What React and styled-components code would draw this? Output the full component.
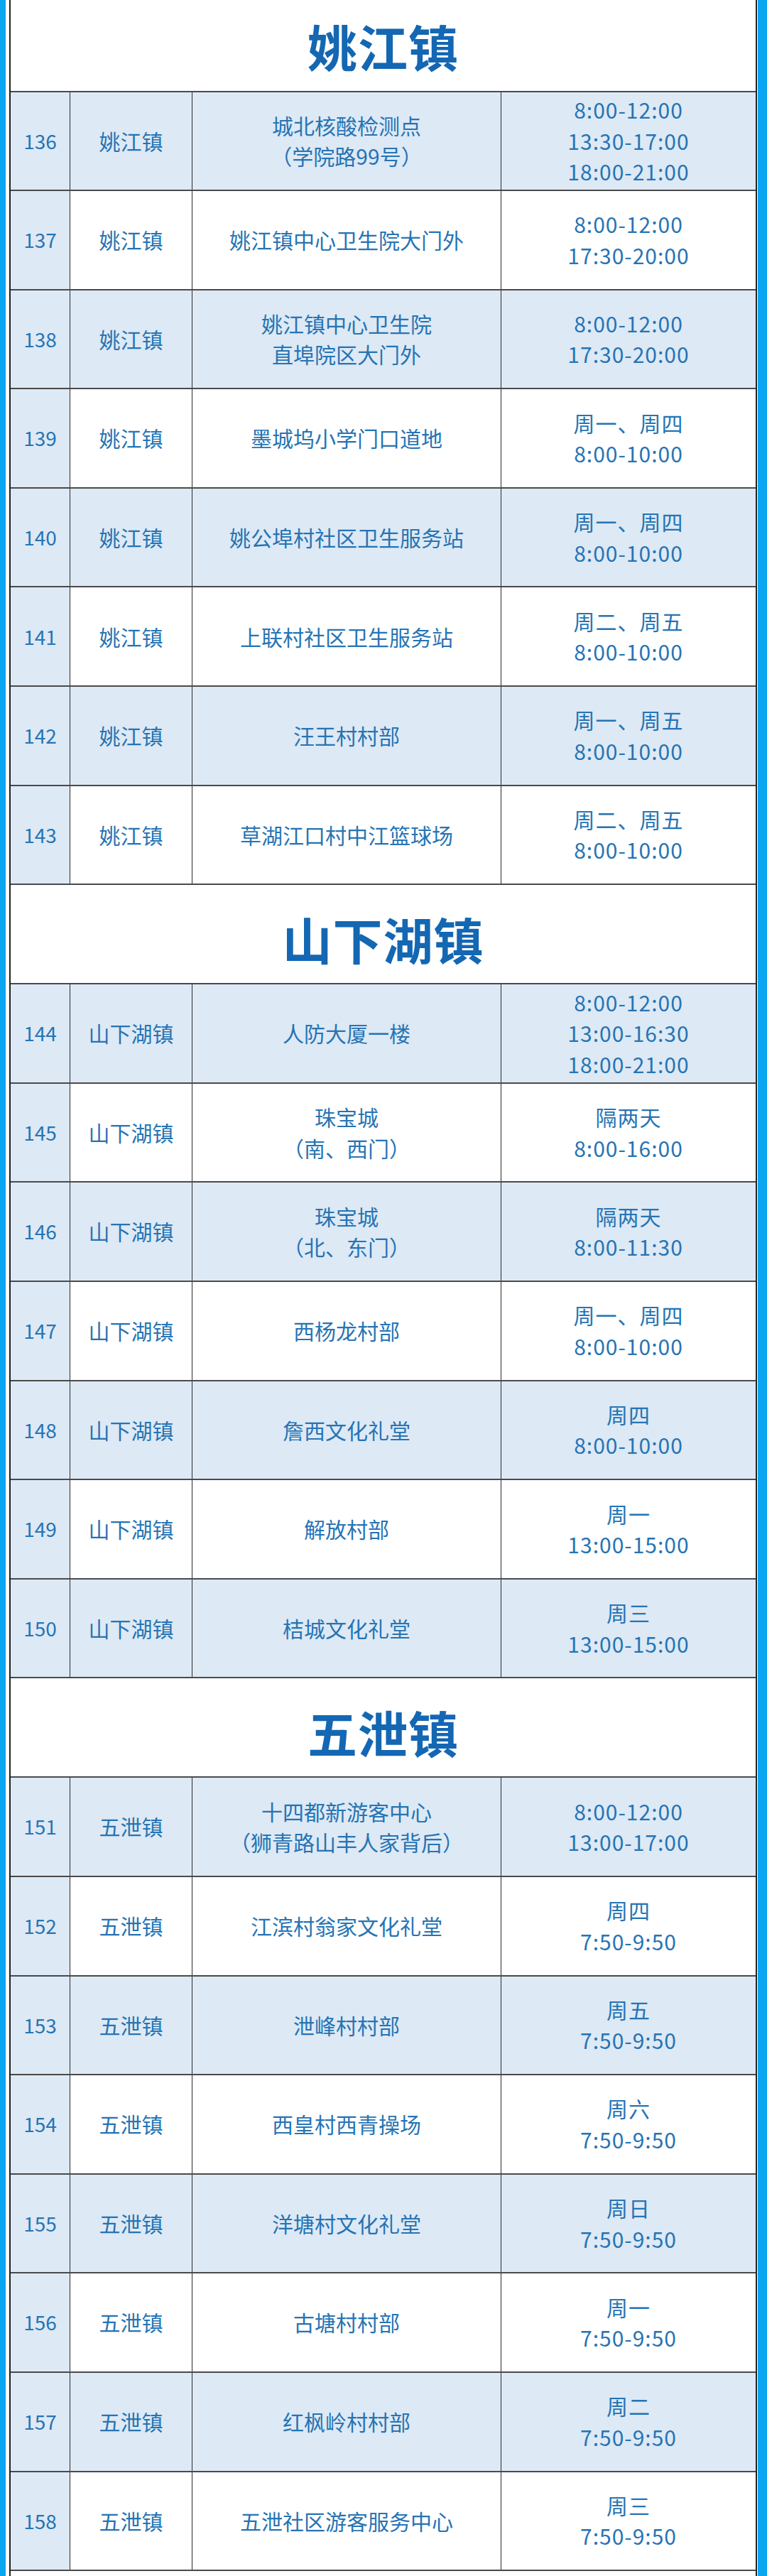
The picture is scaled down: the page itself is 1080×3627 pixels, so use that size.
import React from 'react';
import styled, { createGlobalStyle } from 'styled-components';

const GlobalStyle = createGlobalStyle`
  html, body {
    margin: 0;
    padding: 0;
    background: #0aa6f2;
  }
  body {
    font-family: "Noto Sans CJK SC", "Noto Sans", sans-serif;
  }
`;

const sections = [
  {
    town: '姚江镇',
    first: true,
    rows: [
      ['136', ['城北核酸检测点', '（学院路99号）'], ['8:00-12:00', '13:30-17:00', '18:00-21:00']],
      ['137', ['姚江镇中心卫生院大门外'], ['8:00-12:00', '17:30-20:00']],
      ['138', ['姚江镇中心卫生院', '直埠院区大门外'], ['8:00-12:00', '17:30-20:00']],
      ['139', ['墨城坞小学门口道地'], ['周一、周四', '8:00-10:00']],
      ['140', ['姚公埠村社区卫生服务站'], ['周一、周四', '8:00-10:00']],
      ['141', ['上联村社区卫生服务站'], ['周二、周五', '8:00-10:00']],
      ['142', ['汪王村村部'], ['周一、周五', '8:00-10:00']],
      ['143', ['草湖江口村中江篮球场'], ['周二、周五', '8:00-10:00']],
    ],
  },
  {
    town: '山下湖镇',
    rows: [
      ['144', ['人防大厦一楼'], ['8:00-12:00', '13:00-16:30', '18:00-21:00']],
      ['145', ['珠宝城', '（南、西门）'], ['隔两天', '8:00-16:00']],
      ['146', ['珠宝城', '（北、东门）'], ['隔两天', '8:00-11:30']],
      ['147', ['西杨龙村部'], ['周一、周四', '8:00-10:00']],
      ['148', ['詹西文化礼堂'], ['周四', '8:00-10:00']],
      ['149', ['解放村部'], ['周一', '13:00-15:00']],
      ['150', ['桔城文化礼堂'], ['周三', '13:00-15:00']],
    ],
  },
  {
    town: '五泄镇',
    rows: [
      ['151', ['十四都新游客中心', '（狮青路山丰人家背后）'], ['8:00-12:00', '13:00-17:00']],
      ['152', ['江滨村翁家文化礼堂'], ['周四', '7:50-9:50']],
      ['153', ['泄峰村村部'], ['周五', '7:50-9:50']],
      ['154', ['西皇村西青操场'], ['周六', '7:50-9:50']],
      ['155', ['洋塘村文化礼堂'], ['周日', '7:50-9:50']],
      ['156', ['古塘村村部'], ['周一', '7:50-9:50']],
      ['157', ['红枫岭村村部'], ['周二', '7:50-9:50']],
      ['158', ['五泄社区游客服务中心'], ['周三', '7:50-9:50']],
    ],
  },
  { town: '', rows: [] },
];

const Page = styled.div`
  height: 3627px;
  overflow: hidden;
  background: #0aa6f2;
  padding: 0 13px 0 8px;
`;

const Sheet = styled.div`
  background: #ffffff;
  padding: 0 1px 0 5px;
  min-height: 100%;
`;

const Table = styled.div`
  border-left: 2px solid #222;
  border-right: 2px solid #222;
  display: flex;
  flex-direction: column;
`;

const TownHeader = styled.div`
  height: ${(p) => (p.$first ? '127.5px' : '140px')};
  box-sizing: border-box;
  border-top: ${(p) => (p.$first ? 'none' : '2px solid #4a4a4a')};
  background: #ffffff;
  display: flex;
  align-items: center;
  justify-content: center;
  padding-top: ${(p) => (p.$first ? '2px' : '12px')};
  color: #1467b3;
  font-size: 70px;
  font-weight: 700;
  letter-spacing: 1px;
`;

const Row = styled.div`
  height: 139.6px;
  box-sizing: border-box;
  border-top: 2px solid #4a4a4a;
  display: grid;
  grid-template-columns: 84px 172px 435px 1fr;
  background: ${(p) => (p.$shaded ? '#dde9f5' : '#ffffff')};
`;

const Cell = styled.div`
  display: flex;
  flex-direction: column;
  align-items: center;
  justify-content: center;
  text-align: center;
  color: #2674b4;
  font-size: ${(p) => (p.$small ? '28px' : '30px')};
  line-height: 43.5px;
  border-right: ${(p) => (p.$last ? 'none' : '1px solid #2a2a2a')};
  background: ${(p) => (p.$num ? '#dde9f5' : 'transparent')};
  white-space: nowrap;
`;

const TimeLine = styled.span`
  letter-spacing: 1px;
`;

export default function App() {
  return (
    <>
      <GlobalStyle />
      <Page>
        <Sheet>
          <Table>
            {sections.map((sec, si) => (
              <React.Fragment key={si}>
                <TownHeader $first={sec.first}>{sec.town}</TownHeader>
                {sec.rows.map(([num, place, times], ri) => (
                  <Row key={num} $shaded={ri % 2 === 0}>
                    <Cell $num $small>{num}</Cell>
                    <Cell>{sec.town}</Cell>
                    <Cell>
                      {place.map((l) => (
                        <span key={l}>{l}</span>
                      ))}
                    </Cell>
                    <Cell $last>
                      {times.map((t) => (
                        <TimeLine key={t}>{t}</TimeLine>
                      ))}
                    </Cell>
                  </Row>
                ))}
              </React.Fragment>
            ))}
          </Table>
        </Sheet>
      </Page>
    </>
  );
}
